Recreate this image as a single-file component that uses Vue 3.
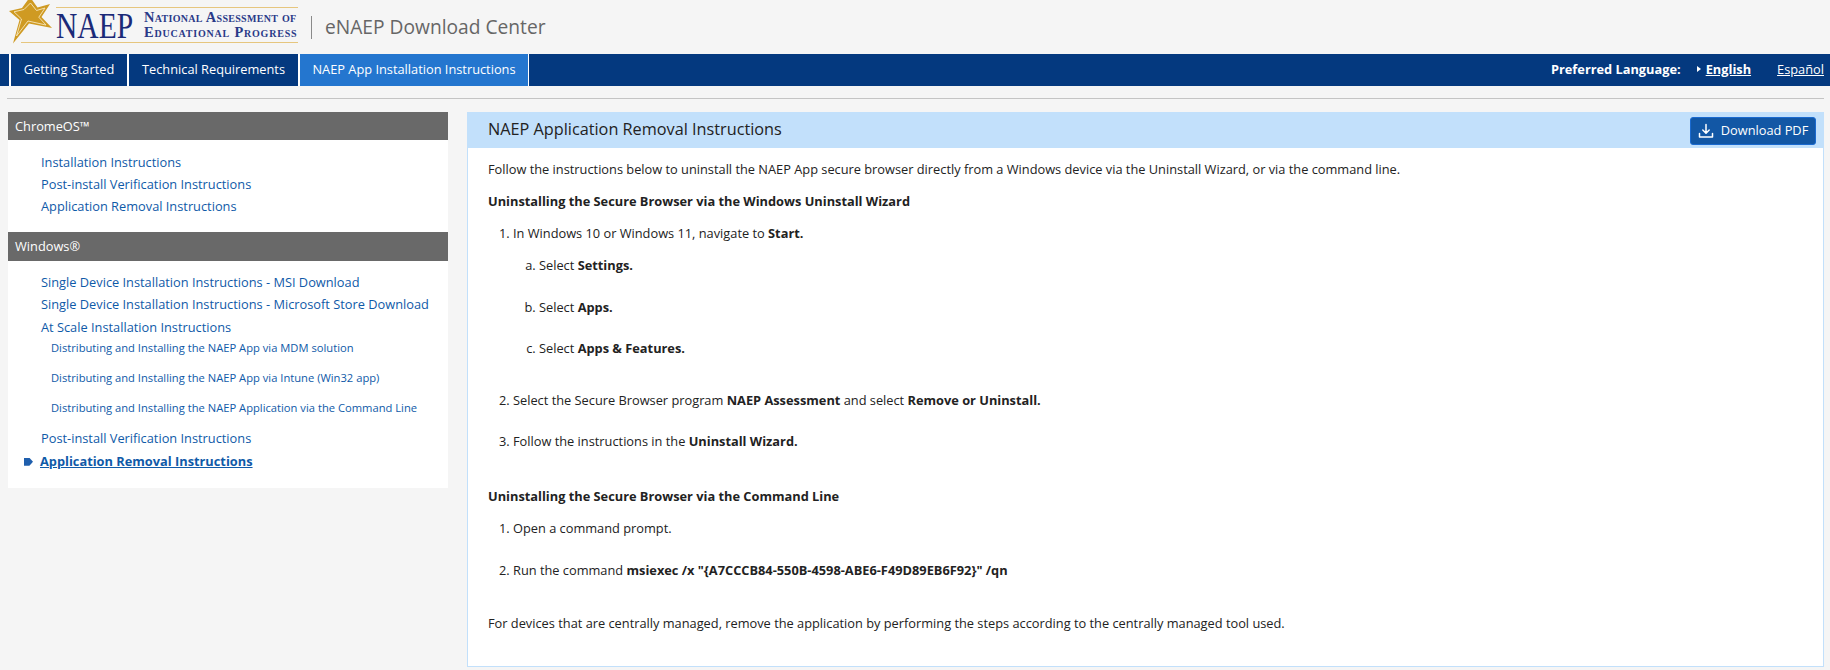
<script setup>
const chrome = ['Installation Instructions', 'Post-install Verification Instructions', 'Application Removal Instructions']
const sub = ['Distributing and Installing the NAEP App via MDM solution', 'Distributing and Installing the NAEP App via Intune (Win32 app)', 'Distributing and Installing the NAEP Application via the Command Line']
</script>

<template>
  <div class="page">
    <header class="top">
      <div class="logo">
        <svg class="star" width="60" height="54" viewBox="0 0 60 54">
          <path d="M30 -3 L37.5 7.5 L50 4 L41.5 17 L52 28 L29 23.5 L13 43.5 L19.5 20 L9 11 L22 8 Z" fill="#cf9a22" />
          <path d="M30.5 3 L36.5 10.5 L45 8 L38.8 17.2 L46 25 L28 21 L16.5 36 L21.5 19 L14 11.8 L24 9.5 Z" fill="none" stroke="#f6e6bd" stroke-width="0.9" />
        </svg>
        <span class="gold g1"></span>
        <span class="gold g2"></span>
        <span class="naep">NAEP</span>
        <span class="org"><span class="org1">National Assessment of</span><span class="org2">Educational Progress</span></span>
      </div>
      <span class="sep"></span>
      <span class="site">eNAEP Download Center</span>
    </header>
    <nav class="nav">
      <a class="tab first">Getting Started</a>
      <a class="tab second">Technical Requirements</a>
      <a class="tab active">NAEP App Installation Instructions</a>
      <div class="lang">
        <strong>Preferred Language:</strong>
        <span class="tri"></span>
        <a class="en">English</a>
        <a class="es">Español</a>
      </div>
    </nav>
    <div class="rule"></div>
    <div class="body">
      <aside class="side">
        <h3 class="sh">ChromeOS™</h3>
        <ul class="links l1">
          <li v-for="c in chrome" :key="c"><a>{{ c }}</a></li>
        </ul>
        <h3 class="sh sh2">Windows®</h3>
        <ul class="links l2">
          <li><a>Single Device Installation Instructions - MSI Download</a></li>
          <li><a>Single Device Installation Instructions - Microsoft Store Download</a></li>
          <li class="scale"><a>At Scale Installation Instructions</a></li>
          <li v-for="s in sub" :key="s" class="sub"><a>{{ s }}</a></li>
          <li class="post"><a>Post-install Verification Instructions</a></li>
          <li class="cur"><span class="bullet"></span><a>Application Removal Instructions</a></li>
        </ul>
      </aside>
      <main class="main">
        <div class="mh">
          <h1>NAEP Application Removal Instructions</h1>
          <button class="dl">
            <svg width="16" height="16" viewBox="0 0 16 16" fill="none" stroke="#fff" stroke-width="1.5" stroke-linecap="round" stroke-linejoin="round">
              <path d="M8 1.5 V10 M4.8 7 L8 10.2 L11.2 7" />
              <path d="M1.5 10.5 V14 H14.5 V10.5" />
            </svg>
            <span class="dlt">Download PDF</span>
          </button>
        </div>
        <div class="content">
          <p>Follow the instructions below to uninstall the NAEP App secure browser directly from a Windows device via the Uninstall Wizard, or via the command line.</p>
          <p><b>Uninstalling the Secure Browser via the Windows Uninstall Wizard</b></p>
          <ol class="num">
            <li>
              <p>In Windows 10 or Windows 11, navigate to <b>Start.</b></p>
              <ol class="alpha">
                <li><p>Select <b>Settings.</b></p></li>
                <li><p>Select <b>Apps.</b></p></li>
                <li><p>Select <b>Apps &amp; Features.</b></p></li>
              </ol>
            </li>
            <li><p>Select the Secure Browser program <b>NAEP Assessment</b> and select <b>Remove or Uninstall.</b></p></li>
            <li><p>Follow the instructions in the <b>Uninstall Wizard.</b></p></li>
          </ol>
          <p class="h2"><b>Uninstalling the Secure Browser via the Command Line</b></p>
          <ol class="num">
            <li><p>Open a command prompt.</p></li>
            <li><p>Run the command <b>msiexec /x "{A7CCCB84-550B-4598-ABE6-F49D89EB6F92}" /qn</b></p></li>
          </ol>
          <p class="last">For devices that are centrally managed, remove the application by performing the steps according to the centrally managed tool used.</p>
        </div>
      </main>
    </div>
  </div>
</template>

<style>
html, body { margin: 0; background: #f5f5f5; }
</style>

<style scoped>
.page { font-family: "Open Sans", sans-serif; font-size: 12.8px; color: #222; height: 670px; overflow: hidden; background: #f5f5f5; }
.top { height: 54px; display: flex; align-items: center; }
.logo { position: relative; width: 298px; height: 54px; flex: none; overflow: hidden; }
.star { position: absolute; left: 0; top: 0; }
.gold { position: absolute; height: 1px; background: #e6c67e; right: 0; }
.g1 { left: 56px; top: 7px; }
.g2 { left: 21px; top: 42px; }
.naep { position: absolute; left: 56px; top: 5px; font-family: "Liberation Serif", serif; font-size: 36px; line-height: 42px; color: #1b2a78; transform: scaleX(.82); transform-origin: left center; }
.org { position: absolute; left: 144px; top: 10px; display: flex; flex-direction: column; font-family: "Liberation Serif", serif; font-size: 14.4px; line-height: 15px; color: #2a3a88; font-variant: small-caps; font-weight: 700; white-space: nowrap; }
.org1 { letter-spacing: 0.3px; }
.org2 { letter-spacing: 0.8px; }
.sep { width: 1px; height: 23px; background: #8a8a8a; margin-left: 13px; }
.site { font-size: 19.2px; color: #666; margin: 0 0 2px 13px; }
.nav { height: 32px; background: #04397f; display: flex; align-items: stretch; color: #fff; }
.tab { display: flex; align-items: center; justify-content: center; color: #fff; white-space: nowrap; box-sizing: border-box; padding-bottom: 2px; }
.first { margin-left: 9px; border-left: 2px solid #fff; width: 118px; }
.second { border-left: 2px solid #fff; width: 171px; }
.active { background: #2476cf; width: 231px; border-left: 2px solid #fff; border-right: 1px solid #fff; }
.lang { margin-left: auto; display: flex; align-items: center; padding: 0 6px 2px 0; }
.lang strong { font-weight: 700; }
.tri { width: 0; height: 0; border-left: 4px solid #fff; border-top: 3.5px solid transparent; border-bottom: 3.5px solid transparent; margin-left: 16px; margin-right: 5px; }
.en { font-weight: 700; text-decoration: underline; }
.es { text-decoration: underline; margin-left: 26px; }
.rule { height: 1px; background: #c4c4c4; margin: 12px 0 13px 7px; width: 1817px; }
.body { display: flex; align-items: flex-start; padding-left: 8px; }
.side { width: 440px; background: #fff; flex: none; }
.sh { margin: 0; background: #696969; color: #fff; font-weight: 400; font-size: 12.8px; height: 28px; line-height: 28px; padding-left: 7px; }
.sh2 { height: 29px; line-height: 29px; }
.links { list-style: none; margin: 0; padding: 0 0 0 33px; color: #0f5aa8; }
.links li { line-height: 22.4px; }
.l1 { padding-top: 11px; padding-bottom: 15px; }
.l1 li { line-height: 22px; }
.l2 { padding-top: 10px; padding-bottom: 16px; }
.l2 .sub { font-size: 11.2px; line-height: 30px; padding-left: 10px; }
.l2 .scale { margin-bottom: -5px; }
.l2 .post { margin-top: 4px; }
.cur { position: relative; font-weight: 700; }
.cur a { text-decoration: underline; margin-left: -1px; }
.bullet { position: absolute; left: -9px; top: 8px; width: 9px; height: 8px; margin-left: -8px; background: #1f5fad; clip-path: polygon(0 0, 60% 0, 100% 50%, 60% 100%, 0 100%); }
.main { width: 1357px; margin-left: 19px; height: 555px; background: #fff; border: 1px solid #c2e0fb; box-sizing: border-box; flex: none; }
.mh { height: 35px; background: #c2e0fb; display: flex; align-items: center; justify-content: space-between; padding: 0 7px 0 20px; }
h1 { margin: 0 0 3px; font-size: 16.25px; font-weight: 400; color: #222; }
.dl { height: 28px; width: 126px; background: #1257a5; border: 1px solid #1a6ad0; border-radius: 3px; color: #fff; font: 12.8px "Open Sans", sans-serif; display: flex; align-items: center; justify-content: center; gap: 7px; padding: 0; }
.dlt { margin-bottom: 2px; }
.content { padding: 11px 20px 0; }
p { margin: 0 0 12px; line-height: 20px; }
ol { margin: 0; padding-left: 25px; }
.num { list-style: decimal; }
.alpha { list-style: lower-alpha; padding-left: 26px; }
.num > li { margin-bottom: 22px; }
.num > li:nth-child(2) { margin-bottom: 21px; }
.alpha > li { margin-bottom: 22px; }
.alpha > li:nth-child(2) { margin-bottom: 21px; }
.alpha > li:last-child { margin-bottom: 32px; }
.h2 { margin-top: 35px; }
.last { margin-top: 33px; }
</style>
